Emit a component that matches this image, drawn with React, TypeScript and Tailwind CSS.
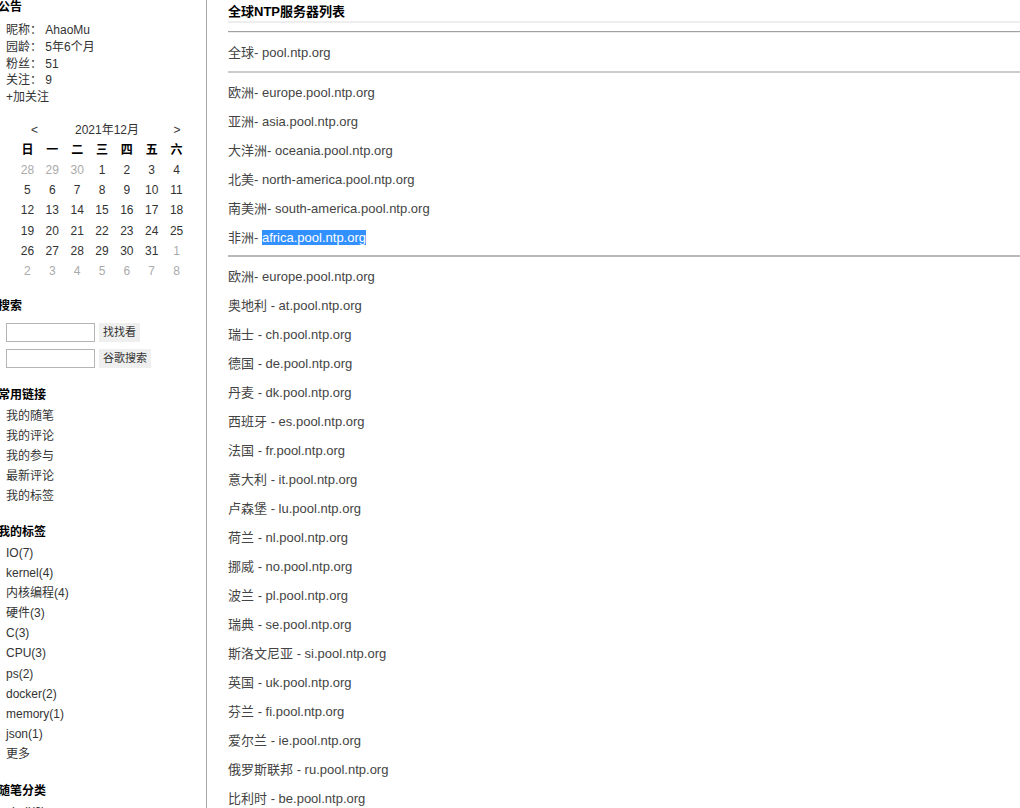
const font = { fontFamily: '"Liberation Sans", "Noto Sans CJK SC", sans-serif' };

const weeks = [
  [28, 29, 30, 1, 2, 3, 4],
  [5, 6, 7, 8, 9, 10, 11],
  [12, 13, 14, 15, 16, 17, 18],
  [19, 20, 21, 22, 23, 24, 25],
  [26, 27, 28, 29, 30, 31, 1],
  [2, 3, 4, 5, 6, 7, 8],
];

const links = ["我的随笔", "我的评论", "我的参与", "最新评论", "我的标签"];
const tags = ["IO(7)", "kernel(4)", "内核编程(4)", "硬件(3)", "C(3)", "CPU(3)", "ps(2)", "docker(2)", "memory(1)", "json(1)", "更多"];

const regions = [
  ["欧洲", "europe.pool.ntp.org"],
  ["亚洲", "asia.pool.ntp.org"],
  ["大洋洲", "oceania.pool.ntp.org"],
  ["北美", "north-america.pool.ntp.org"],
  ["南美洲", "south-america.pool.ntp.org"],
];

const countries = [
  ["奥地利", "at"],
  ["瑞士", "ch"],
  ["德国", "de"],
  ["丹麦", "dk"],
  ["西班牙", "es"],
  ["法国", "fr"],
  ["意大利", "it"],
  ["卢森堡", "lu"],
  ["荷兰", "nl"],
  ["挪威", "no"],
  ["波兰", "pl"],
  ["瑞典", "se"],
  ["斯洛文尼亚", "si"],
  ["英国", "uk"],
  ["芬兰", "fi"],
  ["爱尔兰", "ie"],
  ["俄罗斯联邦", "ru"],
  ["比利时", "be"],
];

function Heading({ children }: { children: React.ReactNode }) {
  return <h3 className="-ml-[2px] text-[12px] font-bold leading-[14px] text-black">{children}</h3>;
}

function Sidebar() {
  return (
    <aside className="w-[207px] shrink-0 overflow-hidden border-r border-[#a8a8a8] text-[12px] text-[#333]">
      <Heading>公告</Heading>
      <div className="mt-[8px] pl-[6px] leading-[16.75px]">
        <div>昵称： AhaoMu</div>
        <div>园龄： 5年6个月</div>
        <div>粉丝： 51</div>
        <div>关注： 9</div>
        <div>+加关注</div>
      </div>

      <div className="ml-[15px] mt-[14px] w-[174px]">
        <div className="flex h-[20px] items-center">
          <span className="w-[34px] text-center pl-[5px]">&lt;</span>
          <span className="flex-1 text-center">2021年12月</span>
          <span className="w-[24px] text-center">&gt;</span>
        </div>
        <div className="grid h-[20px] grid-cols-7 items-center text-center font-bold text-black">
          {["日", "一", "二", "三", "四", "五", "六"].map((d) => (
            <span key={d}>{d}</span>
          ))}
        </div>
        {weeks.map((w, i) => (
          <div key={i} className="grid h-[20.3px] grid-cols-7 items-center text-center">
            {w.map((d, j) => {
              const other = (i === 0 && d > 20) || (i >= 4 && d < 10);
              return (
                <span key={j} className={other ? "text-[#aaa]" : "text-[#333]"}>
                  {d}
                </span>
              );
            })}
          </div>
        ))}
      </div>

      <div className="mt-[17px]">
        <Heading>搜索</Heading>
      </div>
      <div className="mt-[10px] flex flex-col gap-[7px] pl-[6px]">
        <div className="flex items-center gap-[4px]">
          <input className="h-[19px] w-[89px] border border-[#b5b5b5] bg-white" />
          <button className="h-[19px] bg-[#efefef] px-[4px] text-[11px] text-[#333]">找找看</button>
        </div>
        <div className="flex items-center gap-[4px]">
          <input className="h-[19px] w-[89px] border border-[#b5b5b5] bg-white" />
          <button className="h-[19px] bg-[#efefef] px-[4px] text-[11px] text-[#333]">谷歌搜索</button>
        </div>
      </div>

      <div className="mt-[20px]">
        <Heading>常用链接</Heading>
      </div>
      <div className="mt-[4px] pl-[6px]">
        {links.map((l) => (
          <div key={l} className="h-[20px] leading-[20px]">{l}</div>
        ))}
      </div>

      <div className="mt-[19px]">
        <Heading>我的标签</Heading>
      </div>
      <div className="mt-[4px] pl-[6px]">
        {tags.map((t) => (
          <div key={t} className="h-[20.2px] leading-[20px]">{t}</div>
        ))}
      </div>

      <div className="mt-[19px]">
        <Heading>随笔分类</Heading>
      </div>
      <div className="mt-[4px] pl-[6px]">
        <div className="h-[20px] leading-[20px]">shell(3)</div>
        <div className="h-[20px] leading-[20px]">linux(10)</div>
      </div>
    </aside>
  );
}

function Row({ children }: { children: React.ReactNode }) {
  return <div className="h-[29px] leading-[29px]">{children}</div>;
}

export default function App() {
  return (
    <div className="flex min-h-[808px] bg-white" style={font}>
      <Sidebar />
      <main className="flex-1 pl-[21px] text-[13px] text-[#444]">
        <div className="h-[23px] border-b-2 border-[#eeeeee] text-[13px] font-bold leading-[24px] text-black">
          全球NTP服务器列表
        </div>
        <div className="mt-[8px] border-t border-b border-t-[#a0a0a0] border-b-[#ececec]" />

        <div className="pt-[5px] pb-[4px]">
          <Row>全球- pool.ntp.org</Row>
        </div>
        <div className="border-t-2 border-[#cccccc]" />

        <div className="pt-[5px] pb-[3px]">
          {regions.map(([n, h]) => (
            <Row key={h}>
              {n}- {h}
            </Row>
          ))}
          <Row>
            非洲- <span className="bg-[#3390ff] text-white">africa.pool.ntp.org</span>
          </Row>
        </div>
        <div className="border-t-2 border-[#b8b8b8]" />

        <div className="py-[5px]">
          <Row>欧洲- europe.pool.ntp.org</Row>
          {countries.map(([n, c]) => (
            <Row key={c}>
              {n} - {c}.pool.ntp.org
            </Row>
          ))}
        </div>
      </main>
    </div>
  );
}
